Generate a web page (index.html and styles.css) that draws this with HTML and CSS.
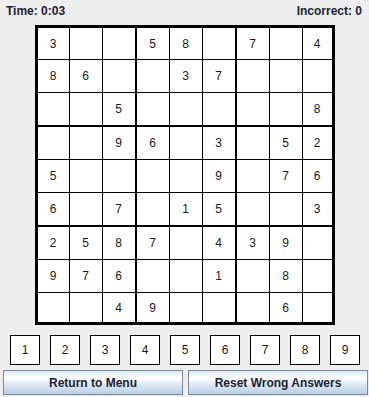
FILE: index.html
```html
<!DOCTYPE html>
<html>
<head>
<meta charset="utf-8">
<link rel="stylesheet" href="styles.css">
</head>
<body>
<div class="app">
  <div class="header">
    <span class="label">Time: 0:03</span>
    <span class="label">Incorrect: 0</span>
  </div>
  <div class="board">
    <div class="c">3</div><div class="c"></div><div class="c"></div><div class="c">5</div><div class="c">8</div><div class="c"></div><div class="c">7</div><div class="c"></div><div class="c">4</div>
    <div class="c">8</div><div class="c">6</div><div class="c"></div><div class="c"></div><div class="c">3</div><div class="c">7</div><div class="c"></div><div class="c"></div><div class="c"></div>
    <div class="c"></div><div class="c"></div><div class="c">5</div><div class="c"></div><div class="c"></div><div class="c"></div><div class="c"></div><div class="c"></div><div class="c">8</div>
    <div class="c"></div><div class="c"></div><div class="c">9</div><div class="c">6</div><div class="c"></div><div class="c">3</div><div class="c"></div><div class="c">5</div><div class="c">2</div>
    <div class="c">5</div><div class="c"></div><div class="c"></div><div class="c"></div><div class="c"></div><div class="c">9</div><div class="c"></div><div class="c">7</div><div class="c">6</div>
    <div class="c">6</div><div class="c"></div><div class="c">7</div><div class="c"></div><div class="c">1</div><div class="c">5</div><div class="c"></div><div class="c"></div><div class="c">3</div>
    <div class="c">2</div><div class="c">5</div><div class="c">8</div><div class="c">7</div><div class="c"></div><div class="c">4</div><div class="c">3</div><div class="c">9</div><div class="c"></div>
    <div class="c">9</div><div class="c">7</div><div class="c">6</div><div class="c"></div><div class="c"></div><div class="c">1</div><div class="c"></div><div class="c">8</div><div class="c"></div>
    <div class="c"></div><div class="c"></div><div class="c">4</div><div class="c">9</div><div class="c"></div><div class="c"></div><div class="c"></div><div class="c">6</div><div class="c"></div>
  </div>
  <div class="numbers">
    <div class="num">1</div><div class="num">2</div><div class="num">3</div><div class="num">4</div><div class="num">5</div><div class="num">6</div><div class="num">7</div><div class="num">8</div><div class="num">9</div>
  </div>
  <div class="actions">
    <button class="btn">Return to Menu</button>
    <button class="btn">Reset Wrong Answers</button>
  </div>
</div>
</body>
</html>
```
FILE: styles.css
```css
html, body {
  margin: 0;
  padding: 0;
  background: #eeeeee;
}
.app {
  width: 369px;
  height: 397px;
  font-family: "Liberation Sans", Arial, sans-serif;
  font-size: 12px;
  color: #222222;
}
.header {
  box-sizing: border-box;
  height: 25px;
  padding: 4px 7px 0 6px;
  display: flex;
  justify-content: space-between;
  line-height: 14px;
}
.label {
  font-weight: bold;
  color: #222233;
}
.board {
  box-sizing: border-box;
  width: 300px;
  height: 300px;
  margin: 0 auto;
  padding: 3px;
  background: #000000;
  display: grid;
  grid-template-columns: 31px 32px 32px 33px 32px 32px 33px 32px 29px;
  grid-template-rows: 31px 32px 32px 33px 32px 32px 33px 32px 29px;
  gap: 1px;
}
.c {
  background: #ffffff;
  display: flex;
  align-items: center;
  justify-content: center;
  font-size: 12px;
  color: #1a1a1a;
}
.c:nth-child(9n+4),
.c:nth-child(9n+7) {
  margin-left: 1px;
}
.c:nth-child(n+28):nth-child(-n+36),
.c:nth-child(n+55):nth-child(-n+63) {
  margin-top: 1px;
}
.numbers {
  display: flex;
  justify-content: center;
  gap: 10px;
  margin-top: 10px;
  padding-left: 1px;
}
.num {
  box-sizing: border-box;
  width: 30px;
  height: 30px;
  border: 1px solid #000000;
  background: #ffffff;
  display: flex;
  align-items: center;
  justify-content: center;
  color: #1a1a1a;
}
.actions {
  display: flex;
  gap: 5px;
  margin-top: 5px;
  padding-left: 3px;
}
.btn {
  box-sizing: border-box;
  width: 180px;
  height: 25px;
  border: 1px solid #7a8a99;
  border-radius: 0;
  background: linear-gradient(to bottom, #dde8f3 0%, #ffffff 30%, #dde8f3 60%, #b8cfe5 100%);
  font-family: "Liberation Sans", Arial, sans-serif;
  font-size: 12px;
  font-weight: bold;
  color: #222233;
  padding: 0;
  margin: 0;
}
```
